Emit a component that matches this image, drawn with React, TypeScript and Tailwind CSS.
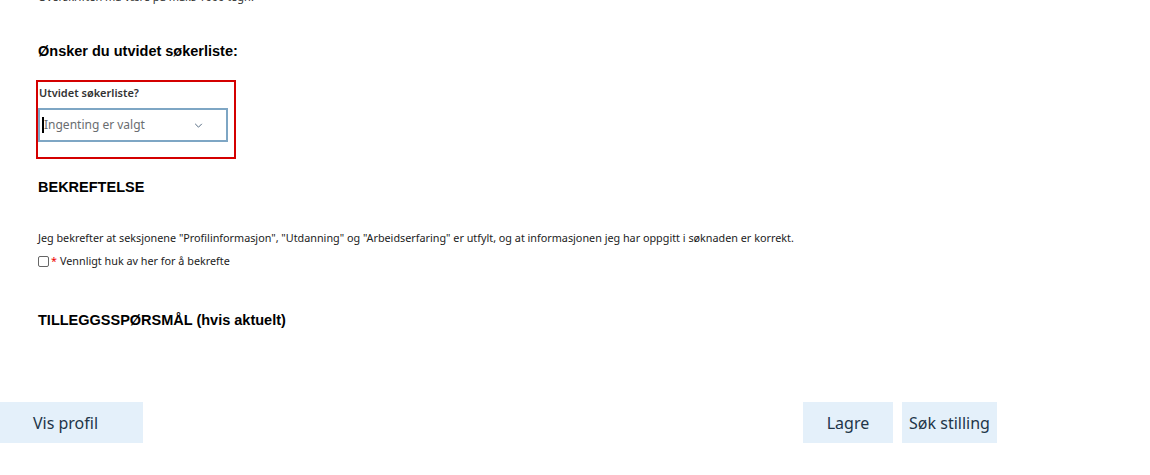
import React from "react";

export default function App() {
  const body = { fontFamily: '"Noto Sans", "Open Sans", sans-serif' };
  const head = { fontFamily: '"Liberation Sans", Arial, sans-serif' };
  return (
    <div className="w-[1150px] h-[475px] bg-white overflow-hidden text-[#222]">
      <div className="pl-[38px]">
        <p style={body} className="mt-[-10px] h-[13px] text-[11px] leading-[13px] text-[#333]">
          Overskriften må være på maks 1000 tegn.
        </p>
        <h2 style={head} className="mt-[40px] text-[14.5px] leading-[16px] font-bold text-black">
          Ønsker du utvidet søkerliste:
        </h2>
        <div className="mt-[21px] ml-[-2px] w-[200px] h-[79px] border-2 border-[#d40000] pt-[4px] pl-[1px]">
          <div style={body} className="text-[11px] leading-[14px] font-semibold text-[#333]">
            Utvidet søkerliste?
          </div>
          <div className="mt-[8px] ml-[-1px] w-[190px] h-[34px] border-2 border-[#7ea6c4] flex items-center pl-[2px] pr-[23px] justify-between">
            <div className="flex items-center">
              <span className="w-[2px] h-[16px] bg-black" />
              <span style={body} className="text-[12px] text-[#6a6d70]">
                Ingenting er valgt
              </span>
            </div>
            <svg width="9" height="5" viewBox="0 0 10 6" fill="none">
              <path d="M1 1 L5 5 L9 1" stroke="#556b82" strokeWidth="1.2" />
            </svg>
          </div>
        </div>
        <h2 style={head} className="mt-[20px] text-[14.5px] leading-[16px] font-bold text-black">
          BEKREFTELSE
        </h2>
        <p style={body} className="mt-[36px] text-[10.8px] leading-[14px] text-[#222]">
          Jeg bekrefter at seksjonene "Profilinformasjon", "Utdanning" og "Arbeidserfaring" er utfylt, og at informasjonen jeg har oppgitt i søknaden er korrekt.
        </p>
        <div style={body} className="mt-[9px] flex items-center text-[10.8px] leading-[14px] text-[#222]">
          <span className="w-[11px] h-[11px] border border-[#666] rounded-[2px] bg-white" />
          <span className="text-[#e00] ml-[2px] mr-[3px]">*</span>
          <span>Vennligt huk av her for å bekrefte</span>
        </div>
        <h2 style={head} className="mt-[44px] text-[14.5px] leading-[16px] font-bold text-black">
          TILLEGGSSPØRSMÅL (hvis aktuelt)
        </h2>
      </div>
      <div style={body} className="mt-[74px] flex justify-between pr-[153px]">
        <button className="w-[143px] h-[41px] bg-[#e4f0fa] text-[16px] text-[#223548] pr-[12px]">
          Vis profil
        </button>
        <div className="flex gap-[9px]">
          <button className="w-[90px] h-[41px] bg-[#e4f0fa] text-[16px] text-[#223548]">
            Lagre
          </button>
          <button className="w-[95px] h-[41px] bg-[#e4f0fa] text-[16px] text-[#223548]">
            Søk stilling
          </button>
        </div>
      </div>
    </div>
  );
}
